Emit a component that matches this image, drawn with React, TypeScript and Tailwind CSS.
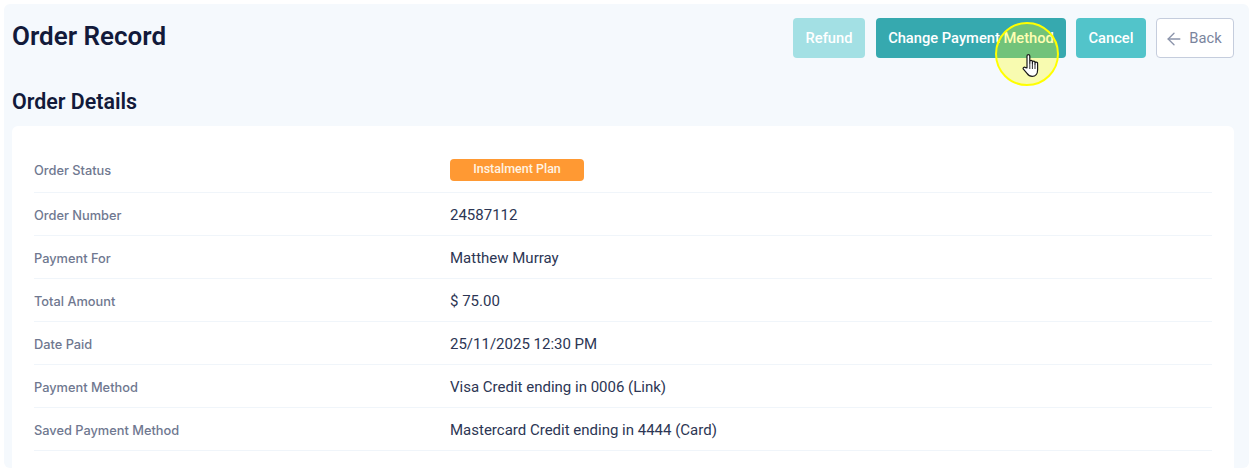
import type { ReactNode } from "react";
import { ArrowLeft } from "lucide-react";

const rows = [
  { label: "Order Number", value: "24587112" },
  { label: "Payment For", value: "Matthew Murray" },
  { label: "Total Amount", value: "$ 75.00" },
  { label: "Date Paid", value: "25/11/2025 12:30 PM" },
  { label: "Payment Method", value: "Visa Credit ending in 0006 (Link)" },
  { label: "Saved Payment Method", value: "Mastercard Credit ending in 4444 (Card)" },
];

function HandCursor() {
  return (
    <svg
      className="absolute left-[25px] top-[29px]"
      width="18"
      height="25"
      viewBox="0 0 18 25"
      aria-hidden
    >
      <path
        d="M5 15V3a1.4 1.4 0 0 1 2.8 0v7.5V8.6a1.3 1.3 0 0 1 2.6 0v2V9.4a1.3 1.3 0 0 1 2.6 0v1.6-.6a1.3 1.3 0 0 1 2.6 0V17c0 3.600-2 6.400-5.400 6.400-2.600 0-3.800-1-5.200-3L1.400 16.200c-.9-1.300.9-2.800 2.100-1.500z"
        fill="#fff"
        stroke="#1a1a1a"
        strokeWidth="1.200"
        strokeLinejoin="round"
      />
      <path d="M7.800 11v5M10.400 11v5M13 11v5" stroke="#1a1a1a" strokeWidth="0.900" />
    </svg>
  );
}

function Row({ label, children }: { label: string; children: ReactNode }) {
  return (
    <div className="flex h-[43px] items-center border-b border-[#f0f5fa] pt-[2px]">
      <div className="mt-[2px] w-[416px] font-['Inter',sans-serif] text-[12.800px] font-medium text-[#6f7890]">
        {label}
      </div>
      <div className="font-['Roboto',sans-serif] text-[15px] text-[#2c3654]">{children}</div>
    </div>
  );
}

export default function App() {
  return (
    <div className="h-[472px] w-[1253px] overflow-hidden bg-white p-1 font-['Roboto',sans-serif]">
      <div className="relative h-[464px] rounded-md bg-[#f5f9fd] pl-2 pr-[15px]">
        <div className="flex items-start justify-between pt-[14px]">
          <h1 className="text-[26px] leading-9 font-semibold text-[#121a3a]">Order Record</h1>
          <div className="flex items-center gap-[10px] text-[14.700px] font-medium">
            <button className="mr-px flex h-10 w-[72px] items-center justify-center rounded-[4px] bg-[#a3e0e4] pt-px text-white">
              Refund
            </button>
            <button className="flex h-10 w-[190px] items-center justify-center rounded-[4px] bg-[#36a9af] pt-px text-white">
              Change Payment Method
            </button>
            <button className="flex h-10 w-[70px] items-center justify-center rounded-[4px] bg-[#52c4ca] pt-px text-white">
              Cancel
            </button>
            <button className="flex h-10 w-[78px] items-center justify-center gap-[5px] rounded-[4px] border border-[#c5cddd] bg-white pt-px pr-1 font-normal text-[#7a849d]">
              <ArrowLeft size={20} strokeWidth={1.600} className="text-[#8b94ab]" />
              Back
            </button>
          </div>
        </div>

        <h2 className="mt-[30px] h-[38px] text-[21.400px] leading-7 font-semibold text-[#121a3a]">Order Details</h2>

        <div className="h-[342px] rounded-t-md bg-white px-[22px] pt-[24px]">
          <div className="flex h-[43px] items-center border-b border-[#f0f5fa] pb-[1px]">
            <div className="w-[416px] font-['Inter',sans-serif] text-[12.800px] font-medium text-[#6f7890]">
              Order Status
            </div>
            <span className="mb-[2px] flex h-[22px] w-[134px] items-center justify-center rounded-[4px] bg-[#ff9933] text-[12.500px] font-medium text-[#fff3e2]">
              Instalment Plan
            </span>
          </div>
          {rows.map((row) => (
            <Row key={row.label} label={row.label}>
              {row.value}
            </Row>
          ))}
        </div>

        {/* click highlight around the mouse pointer */}
        <div className="absolute left-[991px] top-[18px] h-[64px] w-[64px] rounded-full border-2 border-[#ffff00] bg-[#ffff00]/30">
          <HandCursor />
        </div>
      </div>
    </div>
  );
}
